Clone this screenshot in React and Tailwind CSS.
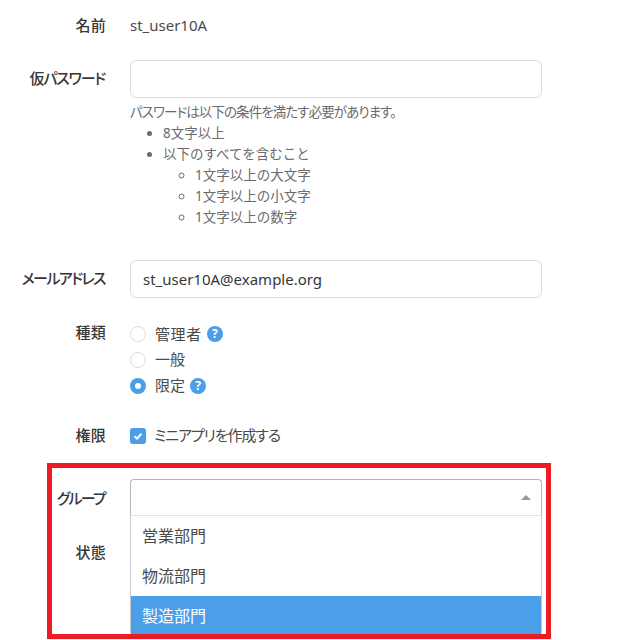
const font = { fontFamily: '"Noto Sans", "Noto Sans CJK JP", sans-serif' };

function Row({ label, className = "", labelClass = "", children }) {
  return (
    <div className={`flex gap-6 ${className}`}>
      <div className={`w-[106px] shrink-0 text-right font-medium text-[15px] leading-[21px] text-[#363636] ${labelClass}`}>{label}</div>
      <div className="w-[412px] shrink-0">{children}</div>
    </div>
  );
}

function Help() {
  return (
    <span className="inline-flex h-4 w-4 items-center justify-center rounded-full bg-[#4a9fe8] text-[12px] font-bold leading-none text-white">?</span>
  );
}

function Radio({ checked, label, help, labelClass = "" }) {
  return (
    <div className="flex h-[26px] items-center">
      {checked ? (
        <span className="flex h-4 w-4 items-center justify-center rounded-full bg-[#4a9fe8]">
          <span className="h-1.5 w-1.5 rounded-full bg-white"></span>
        </span>
      ) : (
        <span className="h-4 w-4 rounded-full border border-[#dbdbdb] bg-white"></span>
      )}
      <span className={`ml-[9px] mr-[5px] text-[15px] leading-[21px] text-[#4a4a4a] ${labelClass}`}>{label}</span>
      {help && <Help />}
    </div>
  );
}

export default function App() {
  return (
    <div className="relative h-[640px] w-[628px] overflow-hidden bg-white" style={font}>
      <div className="pt-[15px]">
        <Row label="名前" labelClass="tracking-[0.3px]">
          <div className="text-[15px] leading-[21px] text-[#4a4a4a]">st_user10A</div>
        </Row>
        <Row label="仮パスワード" className="mt-[24px]" labelClass="pt-2 pr-px tracking-[-1.2px] [font-feature-settings:'palt']">
          <div className="h-[38px] rounded-md border border-[#dbdbdb] bg-white"></div>
          <p className="mt-1 text-[13.5px] leading-[21px] tracking-[-0.92px] text-[#6b6b6b] [font-feature-settings:'palt']">パスワードは以下の条件を満たす必要があります。</p>
          <ul className="list-disc pl-[33px] text-[13.5px] leading-[21px] text-[#6b6b6b]">
            <li>8文字以上</li>
            <li>
              以下のすべてを含むこと
              <ul className="list-[circle] pl-[32px]">
                <li>1文字以上の大文字</li>
                <li>1文字以上の小文字</li>
                <li>1文字以上の数字</li>
              </ul>
            </li>
          </ul>
        </Row>
        <Row label="メールアドレス" className="mt-[32px]" labelClass="pt-2 pr-px tracking-[-1.6px] [font-feature-settings:'palt']">
          <div className="flex h-[38px] items-center rounded-md border border-[#dbdbdb] bg-white px-3 text-[15px] text-[#363636]">st_user10A@example.org</div>
        </Row>
        <Row label="種類" className="mt-[23px]" labelClass="pt-px tracking-[0.3px]">
          <Radio label="管理者" help labelClass="tracking-[0.6px]" />
          <Radio label="一般" labelClass="-translate-y-px" />
          <Radio checked label="限定" help labelClass="-translate-y-px" />
        </Row>
        <Row label="権限" className="mt-[26px]" labelClass="tracking-[0.3px]">
          <div className="flex h-[21px] items-center">
            <span className="flex h-4 w-4 items-center justify-center rounded-[3px] bg-[#4a9fe8]">
              <svg viewBox="0 0 12 12" className="h-3 w-3" fill="none" stroke="white" strokeWidth="2">
                <path d="M2.5 6.2 5 8.6 9.5 3.8" />
              </svg>
            </span>
            <span className="ml-2 text-[15px] leading-[21px] tracking-[-1.1px] text-[#4a4a4a] [font-feature-settings:'palt']">ミニアプリを作成する</span>
          </div>
        </Row>
        <Row label="グループ" className="mt-[33px]" labelClass="pt-[9px] pr-px tracking-[-1.75px] [font-feature-settings:'palt']">
          <div className="relative flex h-[36px] items-center justify-end rounded-t-[4px] border border-b-0 border-[#b5b5b5] bg-white pr-[10px]">
            <svg viewBox="0 0 10 5" className="h-[5px] w-[10px]"><path d="M0 5 5 0 10 5Z" fill="#999999" /></svg>
          </div>
        </Row>
        <Row label="状態" className="mt-[27px]" labelClass="tracking-[0.3px]">
          <div className="h-6"></div>
        </Row>
      </div>

      <div className="absolute left-[130px] top-[515px] w-[412px] border-x border-t border-x-[#c8c8c8] border-t-[#e3e3e3] bg-white text-[16px] text-[#4a4a4a]">
        <div className="flex h-10 items-center px-[11px]">営業部門</div>
        <div className="flex h-10 items-center px-[11px]">物流部門</div>
        <div className="flex h-10 items-center bg-[#4a9fe8] px-[11px] text-white">製造部門</div>
      </div>

      <div className="pointer-events-none absolute left-[47px] top-[463px] h-[176px] w-[504px] border-[5px] border-[#ed1c24]"></div>
    </div>
  );
}
